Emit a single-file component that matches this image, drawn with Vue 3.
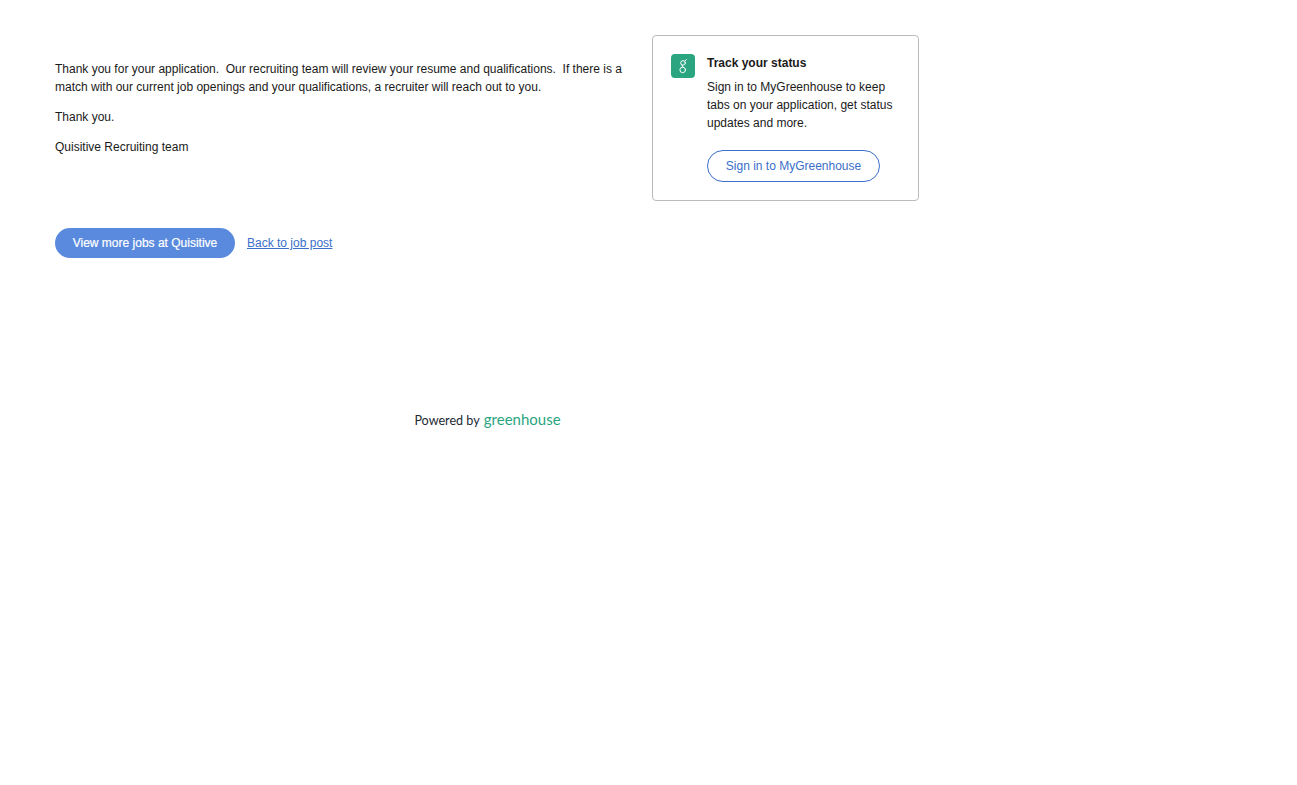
<template>
  <div class="page">
    <div class="top">
      <div class="message">
        <p>Thank you for your application.&nbsp; Our recruiting team will review your resume and qualifications.&nbsp; If there is a match with our current job openings and your qualifications, a recruiter will reach out to you.</p>
        <p>Thank you.</p>
        <p>Quisitive Recruiting team</p>
      </div>
      <aside class="card">
        <span class="badge">
          <svg width="24" height="24" viewBox="0 0 24 24" fill="none" stroke="#fff" stroke-width="1" stroke-linecap="round">
            <circle cx="12" cy="8.9" r="2.3" />
            <circle cx="11.7" cy="15.9" r="2.8" />
            <path d="M10.9 11c.1.7.5 1.4 1 2.1M13.8 7.2L15.4 5.5" />
          </svg>
        </span>
        <div class="card-body">
          <h2>Track your status</h2>
          <p>Sign in to MyGreenhouse to keep tabs on your application, get status updates and more.</p>
          <a class="outline" href="#">Sign in to MyGreenhouse</a>
        </div>
      </aside>
    </div>
    <div class="actions">
      <a class="primary" href="#">View more jobs at Quisitive</a>
      <a class="back" href="#">Back to job post</a>
    </div>
    <footer class="powered">
      <span>Powered by</span>
      <span class="brand">greenhouse</span>
    </footer>
  </div>
</template>

<script setup>
</script>

<style scoped>
.page {
  width: 865px;
  margin-left: 55px;
  padding-top: 35px;
  font-family: "Liberation Sans", Arial, sans-serif;
  font-size: 12px;
  line-height: 18px;
  color: #1a1a1a;
}
.top {
  display: flex;
  gap: 30px;
  align-items: flex-start;
}
.message {
  width: 567px;
  padding-top: 25px;
}
.message p {
  margin: 0 0 12px;
}
.card {
  box-sizing: border-box;
  width: 267px;
  height: 166px;
  padding: 18px;
  display: flex;
  gap: 12px;
  border: 1px solid #bbbbbb;
  border-radius: 4px;
}
.badge {
  flex: none;
  width: 24px;
  height: 24px;
  border-radius: 4px;
  background: #2aa57f;
}
.badge svg {
  display: block;
}
.card-body h2 {
  margin: 0;
  font-size: 12px;
  line-height: 18px;
  font-weight: 700;
}
.card-body p {
  margin: 6px 0 18px;
}
.outline {
  box-sizing: border-box;
  display: block;
  width: 173px;
  height: 32px;
  border: 1px solid #3b6fc9;
  border-radius: 16px;
  color: #3b6fc9;
  text-align: center;
  line-height: 30px;
  text-decoration: none;
}
.actions {
  display: flex;
  align-items: center;
  gap: 12px;
  margin-top: 27px;
}
.primary {
  box-sizing: border-box;
  width: 180px;
  height: 30px;
  border-radius: 15px;
  background: #5a8ade;
  color: #fff;
  text-align: center;
  line-height: 30px;
  text-decoration: none;
  -webkit-text-stroke: 0.2px #fff;
}
.back {
  color: #3b6fc9;
  text-decoration: underline;
}
.powered {
  display: flex;
  justify-content: center;
  align-items: baseline;
  gap: 4px;
  margin-top: 152px;
  font-family: Lato, "Open Sans", sans-serif;
  font-size: 12.6px;
  color: #1c2a33;
  line-height: 18px;
}
.brand {
  font-size: 15px;
  color: #2aa57f;
}
</style>
